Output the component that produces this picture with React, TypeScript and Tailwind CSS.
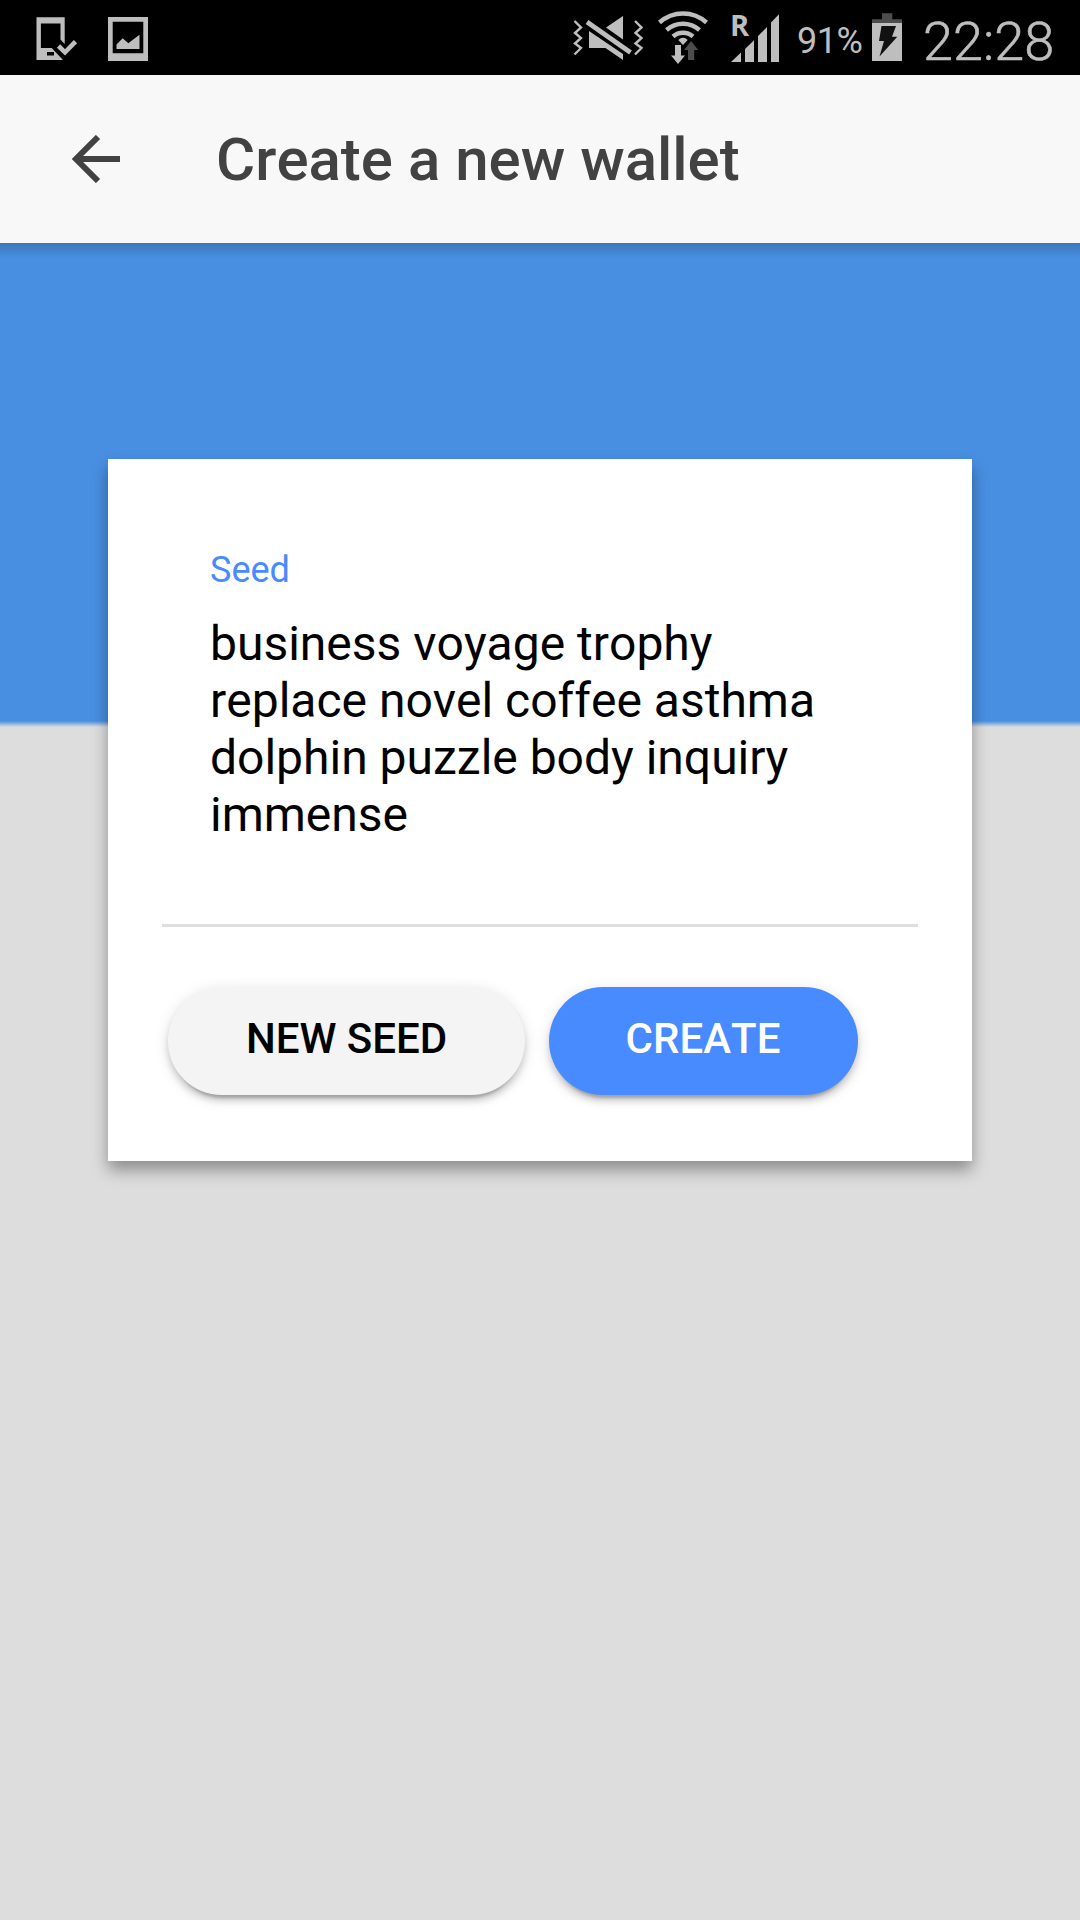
import React from "react";

function PhoneCheckIcon() {
  return (
    <svg className="h-[75px] w-[42px]" viewBox="36 0 42 75" fill="#bebebe">
      <path
        fillRule="evenodd"
        d="M36.500 17.300H64.700V44l-4.200-4.500V23.500H40.900V48H51.700L63 60H36.500ZM47 52h7v3.600h-7Z"
      />
      <path d="M58.500 46 65 52.300 75.500 41.700" fill="none" stroke="#bebebe" strokeWidth="4.600" />
    </svg>
  );
}

function PictureIcon() {
  return (
    <svg className="h-[75px] w-[40px]" viewBox="108 0 40 75" fill="#bebebe">
      <path fillRule="evenodd" d="M108 17h40v44h-40Zm4.700 4.700v31.600h30.600V21.700Z" />
      <path d="M116.500 49V44.500l6.200-6.300 5.600 5 11.200-8.500V49Z" />
    </svg>
  );
}

function MutedVibrateIcon() {
  return (
    <svg className="h-[75px] w-[72px]" viewBox="572 0 72 75" fill="#bebebe">
      <path d="M589 31v17h16.500L623 60V54Z" />
      <path d="M623 16v23.500L606 27.500Z" />
      <path d="M587 22 630.500 52.500" stroke="#bebebe" strokeWidth="4.800" fill="none" />
      <g fill="none" stroke="#bebebe" strokeWidth="2.400">
        <path d="m574.500 21 6.500 6.500-6 5.500 6 5-6 5.500 6 4.500-6.500 6.500" />
        <path d="m635 21 6.500 6.500-6 5.500 6 5-6 5.500 6 4.500-6.500 6.500" />
      </g>
    </svg>
  );
}

function WifiIcon() {
  return (
    <svg className="h-[75px] w-[50px]" viewBox="658 0 50 75" fill="none">
      <g stroke="#bebebe" strokeWidth="4.400">
        <path d="M659.500 22.500a35 35 0 0 1 47 0" />
        <path d="M666.500 30a25 25 0 0 1 33 0" />
        <path d="M673 36.500a15 15 0 0 1 20 0" />
      </g>
      <path d="M683 45 678.300 40q4.700-4.500 9.400 0Z" fill="#bebebe" />
      <path d="M675 45h6v10.500h4L678 64l-7-8.500h4Z" fill="#bebebe" />
      <path d="M688 60h6.200V50h4L691 41l-7 9h4Z" fill="#4d4d4d" />
    </svg>
  );
}

function SignalIcon() {
  return (
    <div className="relative h-[75px] w-[48px]">
      <span className="absolute top-[8px] -left-px font-['Open_Sans'] text-[29px] leading-[34px] font-bold">
        R
      </span>
      <svg className="h-[75px] w-[48px]" viewBox="731 0 48 75" fill="#bebebe">
        <path d="M731 62 741 52.500V62ZM745 62V49l9-8.800V62ZM758 62V36l9-9V62ZM771 62V22.500l8-8.300V62Z" />
      </svg>
    </div>
  );
}

function BatteryIcon() {
  return (
    <svg className="h-[75px] w-[30px]" viewBox="872 0 30 75">
      <path d="M882 13.300h10.300v6H902V23h-30v-3.700h10Z" fill="#4d4d4d" />
      <path d="M872 23h30v38h-30Z" fill="#bebebe" />
      <path d="M881.500 26H896l-4 10.700h5.300L879.500 56.500 884 41h-5Z" fill="#111" />
    </svg>
  );
}

function BackIcon() {
  return (
    <svg className="h-12 w-12" viewBox="0 0 48 48" fill="none" stroke="#424242" strokeWidth="6">
      <path d="M48 24H6M26 2 4 24l22 22" />
    </svg>
  );
}

const pill =
  "flex h-[108px] items-center justify-center rounded-full pb-[4px] text-[42px] leading-[42px] font-medium shadow-[0_9px_3px_-6px_rgba(0,0,0,0.2),0_6px_6px_0_rgba(0,0,0,0.14),0_3px_15px_0_rgba(0,0,0,0.12)]";

export default function App() {
  return (
    <div className="flex h-[1920px] w-[1080px] flex-col overflow-hidden font-[Roboto,sans-serif] [font-kerning:none]">
      <div className="flex h-[75px] items-center bg-black pl-9 text-[#bebebe]">
        <PhoneCheckIcon />
        <div className="w-[30px]" />
        <PictureIcon />
        <div className="ml-[424px] flex items-center">
          <MutedVibrateIcon />
          <div className="ml-[14px]">
            <WifiIcon />
          </div>
          <div className="ml-[23px]">
            <SignalIcon />
          </div>
          <span className="ml-[18px] w-[75px] pt-[6px] text-[36px] leading-[42px] tracking-[-0.5px]">91%</span>
          <BatteryIcon />
          <span className="ml-[21px] pt-[8px] text-[54px] leading-[60px] font-light [-webkit-text-stroke:0.6px_#bebebe]">22:28</span>
        </div>
      </div>

      <header className="flex h-[168px] items-center bg-[#f8f8f8] pl-[72px]">
        <BackIcon />
        <h1 className="ml-24 pt-[2px] text-[60px] leading-[72px] font-medium text-[#424242]">Create a new wallet</h1>
      </header>

      <main className="flex flex-1 flex-col bg-[linear-gradient(to_bottom,#488fe2_0,#488fe2_478px,#dddddd_484px,#dddddd_100%)]">
        <div className="h-[15px] bg-linear-to-b from-black/18 to-transparent" />
        <section className="mx-[108px] mt-[201px] h-[702px] bg-white px-[54px] pt-[90px] shadow-[0_9px_15px_rgba(0,0,0,0.36)]">
          <div className="h-[378px] border-b-[3px] border-[#dedede] pl-12">
            <label className="block text-[36px] leading-[42px] text-[#488aff]">Seed</label>
            <p className="mt-[24px] w-[640px] text-[48px] leading-[57px] text-black">
              business voyage trophy replace novel coffee asthma dolphin puzzle body inquiry immense
            </p>
          </div>
          <div className="mt-[60px] flex gap-6 pl-[6px]">
            <button className={`${pill} w-[357px] bg-[#f4f4f4] text-black`}>NEW SEED</button>
            <button className={`${pill} w-[309px] bg-[#488aff] pr-px text-white`}>CREATE</button>
          </div>
        </section>
      </main>
    </div>
  );
}
